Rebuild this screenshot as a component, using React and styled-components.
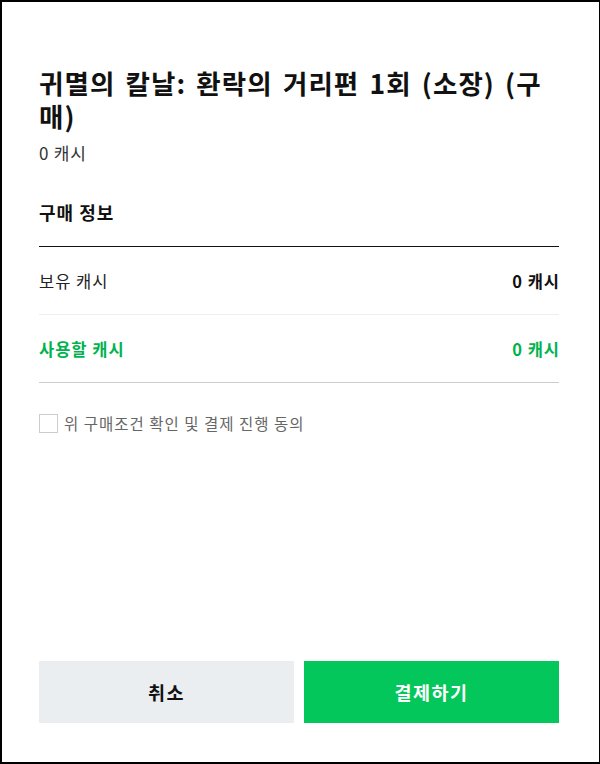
import React from 'react';
import styled, { createGlobalStyle } from 'styled-components';

const GlobalStyle = createGlobalStyle`
  html, body {
    margin: 0;
    padding: 0;
    background: #fff;
  }
  body {
    font-family: "Noto Sans CJK KR", "Noto Sans", sans-serif;
    color: #111;
  }
`;

const Frame = styled.div`
  width: 600px;
  height: 764px;
  box-sizing: border-box;
  border: 2px solid #000;
  border-right-width: 1px;
  padding: 64px 40px 39px 37px;
  display: flex;
  flex-direction: column;
`;

const Title = styled.h1`
  margin: 0;
  font-size: 26.5px;
  line-height: 33px;
  font-weight: 700;
  letter-spacing: 1.1px;
  word-spacing: 3px;
  word-break: break-all;
  color: #111;
`;

const Price = styled.div`
  margin-top: 10px;
  font-size: 17px;
  line-height: 22px;
  letter-spacing: 0.8px;
  color: #333;
`;

const SectionTitle = styled.h2`
  margin: 35px 0 0;
  padding-bottom: 21px;
  border-bottom: 1px solid #111;
  font-size: 18px;
  line-height: 26px;
  font-weight: 700;
  letter-spacing: 1px;
`;

const Row = styled.div`
  display: flex;
  justify-content: space-between;
  align-items: center;
  height: 67px;
  border-bottom: 1px solid ${(p) => (p.$last ? '#ccc' : '#eee')};
  font-size: 16.5px;
  letter-spacing: 1px;
  color: ${(p) => (p.$accent ? '#00b34f' : '#222')};
  font-weight: ${(p) => (p.$accent ? 700 : 400)};
`;

const Amount = styled.span`
  font-weight: 700;
  margin-right: -1px;
  color: ${(p) => (p.$accent ? '#00b34f' : '#111')};
`;

const Agree = styled.label`
  display: flex;
  align-items: center;
  gap: 6px;
  margin-top: 29px;
  font-size: 15.5px;
  letter-spacing: 1px;
  color: #666;
  cursor: pointer;
`;

const Box = styled.span`
  width: 17px;
  height: 17px;
  border: 1px solid #ccc;
  background: #fff;
  flex-shrink: 0;
`;

const Actions = styled.div`
  margin-top: auto;
  display: grid;
  grid-template-columns: 1fr 1fr;
  gap: 10px;
`;

const Button = styled.button`
  height: 62px;
  border: none;
  font-family: inherit;
  font-size: 18.5px;
  font-weight: 700;
  letter-spacing: 1.5px;
  cursor: pointer;
  background: ${(p) => (p.$primary ? '#03c75a' : '#ebeef1')};
  color: ${(p) => (p.$primary ? '#fff' : '#111')};
`;

const App = () => (
  <>
    <GlobalStyle />
    <Frame>
      <Title>귀멸의 칼날: 환락의 거리편 1회 (소장) (구매)</Title>
      <Price>0 캐시</Price>
      <SectionTitle>구매 정보</SectionTitle>
      <Row>
        <span>보유 캐시</span>
        <Amount>0 캐시</Amount>
      </Row>
      <Row $accent $last>
        <span>사용할 캐시</span>
        <Amount $accent>0 캐시</Amount>
      </Row>
      <Agree>
        <Box />
        위 구매조건 확인 및 결제 진행 동의
      </Agree>
      <Actions>
        <Button>취소</Button>
        <Button $primary>결제하기</Button>
      </Actions>
    </Frame>
  </>
);

export default App;
